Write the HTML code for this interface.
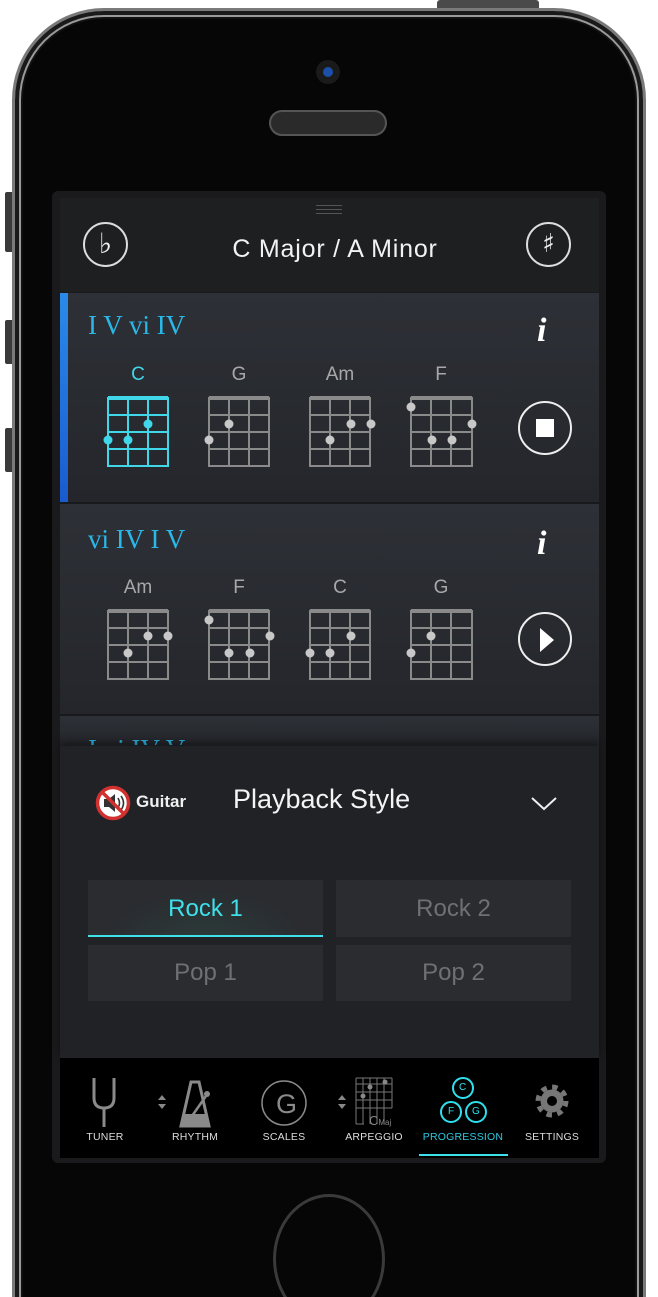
<!DOCTYPE html>
<html style="height:1297px;overflow:hidden"><head><meta charset="utf-8"><style>
*{margin:0;padding:0;box-sizing:border-box}
body{width:658px;height:1297px;background:#fff;position:relative;overflow:hidden;font-family:"Liberation Sans",sans-serif}
#wrap{position:absolute;left:0;top:0;width:658px;height:1297px;overflow:hidden}
.abs{position:absolute}
.phone{left:12px;top:8px;width:634px;height:1380px;border-radius:92px;background:#060606;border:3px solid #7a7a7a;box-shadow:inset 0 0 0 4px #1a1a1a,inset 0 0 0 6px #9a9a9a,inset 0 0 0 8px #111}
.btn{background:#3a3a3a;border-radius:2px}
.screen{left:52px;top:191px;width:554px;height:972px;background:#1a1a1c;border-radius:6px}
.row{left:60px;width:539px;height:210px;background:linear-gradient(180deg,#2d3036,#24262b)}
.title{font-family:"Liberation Serif",serif;color:#2ab8e8;font-size:27px}
.lbl{color:#a8a8a8;font-size:19px;width:60px;text-align:center}
.tab{color:#ddd;font-size:10.5px;top:1131px;text-align:center;width:90px;letter-spacing:.2px}
.sb{background:#2a2c30;color:#6e7073;font-size:24px;text-align:center;line-height:57px;width:235px;height:57px}
</style></head><body><div id="wrap">
<div class="abs btn" style="left:437px;top:0;width:102px;height:10px;border-radius:3px 3px 0 0;background:#4a4a4a"></div>
<div class="abs btn" style="left:5px;top:192px;width:9px;height:60px"></div>
<div class="abs btn" style="left:5px;top:320px;width:9px;height:44px"></div>
<div class="abs btn" style="left:5px;top:428px;width:9px;height:44px"></div>
<div class="abs phone"></div>
<div class="abs" style="left:316px;top:60px;width:24px;height:24px;border-radius:50%;background:#1a1a1a"></div>
<div class="abs" style="left:323px;top:67px;width:10px;height:10px;border-radius:50%;background:#1b4fa8"></div>
<div class="abs" style="left:269px;top:110px;width:118px;height:26px;border-radius:13px;background:#2a2a2a;border:2px solid #555"></div>
<div class="abs screen"></div>
<div class="abs" style="left:60px;top:198px;width:539px;height:94px;background:#1e1f21"></div>
<div class="abs" style="left:316px;top:205px;width:26px;height:1px;background:#555;box-shadow:0 4px 0 #555,0 8px 0 #555"></div>
<div class="abs" style="left:83px;top:222px;width:45px;height:45px;border-radius:50%;border:2px solid #ddd;color:#eee;font-size:28px;text-align:center;line-height:40px;font-family:'DejaVu Sans',sans-serif">♭</div>
<div class="abs" style="left:526px;top:222px;width:45px;height:45px;border-radius:50%;border:2px solid #ddd;color:#eee;font-size:26px;text-align:center;line-height:40px;font-family:'DejaVu Sans',sans-serif">♯</div>
<div class="abs" style="left:130px;top:235px;width:410px;text-align:center;color:#f2f2f2;font-size:25px;letter-spacing:.8px">C Major / A Minor</div>
<div class="abs row" style="top:293px"></div>
<div class="abs" style="left:60px;top:293px;width:8px;height:209px;background:linear-gradient(180deg,#2a8ae8,#1a5bd0)"></div>
<div class="abs title" style="left:88px;top:310px">I V vi IV</div>
<div class="abs" style="left:537px;top:312px;color:#fff;font:italic bold 34px 'Liberation Serif',serif">i</div>
<div class="abs" style="left:518px;top:401px;width:54px;height:54px;border-radius:50%;border:2px solid #eee"></div>
<div class="abs" style="left:536px;top:419px;width:18px;height:18px;background:#fff"></div>
<div class="abs" style="left:60px;top:502px;width:539px;height:2px;background:#18191b"></div>
<div class="abs row" style="top:504px"></div>
<div class="abs title" style="left:88px;top:524px">vi IV I V</div>
<div class="abs" style="left:537px;top:525px;color:#fff;font:italic bold 34px 'Liberation Serif',serif">i</div>
<div class="abs" style="left:518px;top:612px;width:54px;height:54px;border-radius:50%;border:2px solid #eee"></div>
<svg class="abs" style="left:538px;top:627px" width="18" height="26"><path d="M2 1L16 13L2 25Z" fill="#fff"/></svg>
<div class="abs" style="left:60px;top:714px;width:539px;height:2px;background:#18191b"></div>
<div class="abs row" style="top:716px;height:30px"></div>
<div class="abs title" style="left:88px;top:734px;height:11px;overflow:hidden">I vi IV V</div>
<svg class="abs" style="left:0;top:0" width="658" height="700">
<g stroke-width="2" fill="none">
<g stroke="#40d8e8"><rect x="108" y="398" width="60" height="68"/><line x1="108" y1="398" x2="168" y2="398" stroke-width="4"/><path d="M128 398V466M148 398V466M108 415H168M108 432H168M108 449H168"/></g>
<g stroke="#8a8a8a">
<rect x="209" y="398" width="60" height="68"/><line x1="209" y1="398" x2="269" y2="398" stroke-width="4"/><path d="M229 398V466M249 398V466M209 415H269M209 432H269M209 449H269"/>
<rect x="310" y="398" width="60" height="68"/><line x1="310" y1="398" x2="370" y2="398" stroke-width="4"/><path d="M330 398V466M350 398V466M310 415H370M310 432H370M310 449H370"/>
<rect x="411" y="398" width="61" height="68"/><line x1="411" y1="398" x2="472" y2="398" stroke-width="4"/><path d="M431 398V466M451 398V466M411 415H472M411 432H472M411 449H472"/>
<rect x="108" y="611" width="60" height="68"/><line x1="108" y1="611" x2="168" y2="611" stroke-width="4"/><path d="M128 611V679M148 611V679M108 628H168M108 645H168M108 662H168"/>
<rect x="209" y="611" width="60" height="68"/><line x1="209" y1="611" x2="269" y2="611" stroke-width="4"/><path d="M229 611V679M249 611V679M209 628H269M209 645H269M209 662H269"/>
<rect x="310" y="611" width="60" height="68"/><line x1="310" y1="611" x2="370" y2="611" stroke-width="4"/><path d="M330 611V679M350 611V679M310 628H370M310 645H370M310 662H370"/>
<rect x="411" y="611" width="61" height="68"/><line x1="411" y1="611" x2="472" y2="611" stroke-width="4"/><path d="M431 611V679M451 611V679M411 628H472M411 645H472M411 662H472"/>
</g></g>
<g fill="#40d8e8"><circle cx="108" cy="440" r="4.5"/><circle cx="128" cy="440" r="4.5"/><circle cx="148" cy="424" r="4.5"/></g>
<g fill="#c8c8c8">
<circle cx="229" cy="424" r="4.5"/><circle cx="209" cy="440" r="4.5"/>
<circle cx="351" cy="424" r="4.5"/><circle cx="371" cy="424" r="4.5"/><circle cx="330" cy="440" r="4.5"/>
<circle cx="411" cy="407" r="4.5"/><circle cx="472" cy="424" r="4.5"/><circle cx="432" cy="440" r="4.5"/><circle cx="452" cy="440" r="4.5"/>
<circle cx="148" cy="636" r="4.5"/><circle cx="168" cy="636" r="4.5"/><circle cx="128" cy="653" r="4.5"/>
<circle cx="209" cy="620" r="4.5"/><circle cx="270" cy="636" r="4.5"/><circle cx="229" cy="653" r="4.5"/><circle cx="250" cy="653" r="4.5"/>
<circle cx="351" cy="636" r="4.5"/><circle cx="310" cy="653" r="4.5"/><circle cx="330" cy="653" r="4.5"/>
<circle cx="431" cy="636" r="4.5"/><circle cx="411" cy="653" r="4.5"/>
</g>
</svg>
<div class="abs lbl" style="left:108px;top:364px;color:#40d8e8">C</div>
<div class="abs lbl" style="left:209px;top:364px">G</div>
<div class="abs lbl" style="left:310px;top:364px">Am</div>
<div class="abs lbl" style="left:411px;top:364px">F</div>
<div class="abs lbl" style="left:108px;top:577px">Am</div>
<div class="abs lbl" style="left:209px;top:577px">F</div>
<div class="abs lbl" style="left:310px;top:577px">C</div>
<div class="abs lbl" style="left:411px;top:577px">G</div>
<div class="abs" style="left:60px;top:746px;width:539px;height:312px;background:#202226;box-shadow:0 -4px 8px rgba(0,0,0,.4)"></div>
<svg class="abs" style="left:94px;top:784px" width="38" height="38"><circle cx="19" cy="19" r="15.5" fill="#fff" stroke="#d0302e" stroke-width="3.5"/><path d="M10 15h5l6-5v18l-6-5h-5z" fill="#333"/><path d="M24 14q3 5 0 10M27 12q5 7 0 14" stroke="#333" stroke-width="1.6" fill="none"/><line x1="8" y1="8" x2="30" y2="30" stroke="#d0302e" stroke-width="3.5"/></svg>
<div class="abs" style="left:136px;top:792px;color:#f0f0f0;font-size:17px;font-weight:bold">Guitar</div>
<div class="abs" style="left:233px;top:784px;color:#f4f4f4;font-size:27px">Playback Style</div>
<svg class="abs" style="left:530px;top:795px" width="28" height="18"><path d="M2 3L14 14L26 3" stroke="#eee" stroke-width="2" fill="none"/></svg>
<div class="abs sb" style="left:88px;top:880px;color:#3ee0ea;background:radial-gradient(ellipse at 50% 110%,#2c3b3a,#2a2c30 60%)">Rock 1</div>
<div class="abs" style="left:88px;top:935px;width:235px;height:2px;background:#3ee0ea"></div>
<div class="abs sb" style="left:336px;top:880px">Rock 2</div>
<div class="abs sb" style="left:88px;top:945px;height:56px;line-height:56px">Pop 1</div>
<div class="abs sb" style="left:336px;top:945px;height:56px;line-height:56px">Pop 2</div>
<div class="abs" style="left:60px;top:1058px;width:539px;height:100px;background:#000"></div>
<svg class="abs" style="left:60px;top:1070px" width="539" height="60">
<path d="M34 8v20q0 10 10 10t10-10V8M44 38v19" stroke="#8a8a8a" stroke-width="3" fill="none"/>
<path d="M98 30l4-5 4 5zM98 34l4 5 4-5z" fill="#888"/>
<path d="M121 56l10-44h8l10 44z" fill="none" stroke="#8a8a8a" stroke-width="3"/><path d="M123 44h24l3 12h-30z" fill="#8a8a8a"/><path d="M132 46l14-20" stroke="#8a8a8a" stroke-width="2.5"/><circle cx="147" cy="24" r="3" fill="#8a8a8a"/>
<circle cx="224" cy="33" r="22" stroke="#8a8a8a" stroke-width="1.5" fill="none"/>
<path d="M278 30l4-5 4 5zM278 34l4 5 4-5z" fill="#888"/>
<path d="M296 8h36M296 14h36M296 22h36M296 30h36M296 38h36M296 8v46M303 8v46M310 8v46M317 8v46M324 8v46M332 8v30M296 54h8" stroke="#777" stroke-width="1" fill="none"/>
<circle cx="303" cy="26" r="2.5" fill="#888"/><circle cx="310" cy="17" r="2.5" fill="#888"/><circle cx="325" cy="12" r="2.5" fill="#888"/>
<g stroke="#2ee0ee" stroke-width="2" fill="none"><circle cx="403" cy="18" r="10"/><circle cx="391" cy="42" r="10"/><circle cx="416" cy="42" r="10"/></g>
<g fill="#777" stroke="#777"><circle cx="492" cy="31" r="11"/><circle cx="492" cy="31" r="14" fill="none" stroke-width="5" stroke-dasharray="5.5 5.5"/></g><circle cx="492" cy="31" r="5" fill="#000"/>
</svg>
<div class="abs" style="left:276px;top:1089px;font-size:27px;color:#8a8a8a">G</div>
<div class="abs" style="left:369px;top:1113px;font-size:13px;color:#888">C<span style="font-size:8px">Maj</span></div>
<div class="abs" style="left:459px;top:1082px;font-size:10px;color:#2ee0ee">C</div>
<div class="abs" style="left:448px;top:1106px;font-size:10px;color:#2ee0ee">F</div>
<div class="abs" style="left:472px;top:1106px;font-size:10px;color:#2ee0ee">G</div>
<div class="abs tab" style="left:60px">TUNER</div>
<div class="abs tab" style="left:150px">RHYTHM</div>
<div class="abs tab" style="left:239px">SCALES</div>
<div class="abs tab" style="left:329px">ARPEGGIO</div>
<div class="abs tab" style="left:418px;color:#2ec8e0">PROGRESSION</div>
<div class="abs tab" style="left:507px">SETTINGS</div>
<div class="abs" style="left:419px;top:1154px;width:89px;height:2px;background:#3ee0ea"></div>
<div class="abs" style="left:273px;top:1194px;width:112px;height:130px;border-radius:50%;border:3px solid #3a3a3a"></div>
</div></body></html>
